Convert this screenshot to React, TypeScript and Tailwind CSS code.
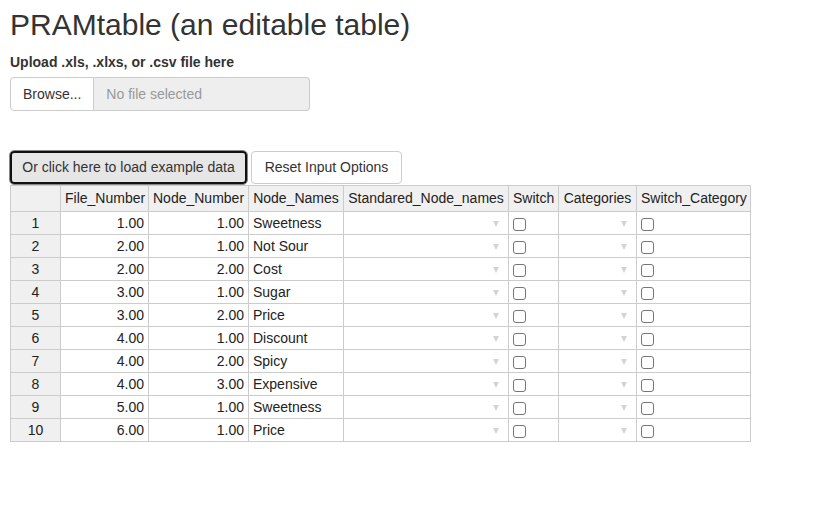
import React from "react";

const rows: [number, string, string, string][] = [
  [1, "1.00", "1.00", "Sweetness"],
  [2, "2.00", "1.00", "Not Sour"],
  [3, "2.00", "2.00", "Cost"],
  [4, "3.00", "1.00", "Sugar"],
  [5, "3.00", "2.00", "Price"],
  [6, "4.00", "1.00", "Discount"],
  [7, "4.00", "2.00", "Spicy"],
  [8, "4.00", "3.00", "Expensive"],
  [9, "5.00", "1.00", "Sweetness"],
  [10, "6.00", "1.00", "Price"],
];

const headers = [
  { label: "", w: "w-[50px]" },
  { label: "File_Number", w: "w-[88px]" },
  { label: "Node_Number", w: "w-[100px]" },
  { label: "Node_Names", w: "w-[95px]" },
  { label: "Standared_Node_names", w: "w-[165px]" },
  { label: "Switch", w: "w-[50px]" },
  { label: "Categories", w: "w-[78px]" },
  { label: "Switch_Category", w: "w-[114px]" },
];

// petit triangle gris des cellules "dropdown"
function Arrow() {
  return (
    <span className="absolute right-[9px] top-[9px] h-0 w-0 border-x-[3.5px] border-t-[6px] border-x-transparent border-t-[#d4d4d4]" />
  );
}

function Check() {
  return (
    <span className="mt-[6px] block h-[13px] w-[13px] rounded-[3px] border border-[#767676] bg-white" />
  );
}

export default function App() {
  const cell = "h-[23px] border border-[#ccc] px-[4px] py-0 leading-[22px]";

  return (
    <div className="min-h-[510px] bg-white px-[10px] font-['Liberation_Sans',Arial,sans-serif] text-[14px] text-[#333]">
      <h1 className="pt-[8px] text-[30px] leading-[33px] font-normal">
        PRAMtable (an editable table)
      </h1>

      <div className="mt-[11px] text-[14px] font-bold leading-[20px]">
        Upload .xls, .xlxs, or .csv file here
      </div>

      <div className="mt-[5px] flex h-[34px] w-[300px]">
        <div className="flex items-center rounded-l-[4px] border border-[#ccc] bg-white px-[12px]">
          Browse...
        </div>
        <div className="flex flex-1 items-center rounded-r-[4px] border border-l-0 border-[#ccc] bg-[#eee] px-[12px] text-[#999]">
          No file selected
        </div>
      </div>

      <div className="mt-[40px] flex gap-[4px]">
        <button
          type="button"
          className="h-[33px] w-[237px] rounded-[4px] border-[2px] border-[#111] bg-[#e6e6e6] outline outline-1 outline-[#888] text-[14px] text-[#333]"
        >
          Or click here to load example data
        </button>
        <button
          type="button"
          className="h-[33px] w-[151px] rounded-[4px] border border-[#ccc] bg-white text-[14px] text-[#333]"
        >
          Reset Input Options
        </button>
      </div>

      <table className="mt-[1px] w-[741px] table-fixed border-collapse text-[14px] text-[#222]">
        <thead>
          <tr>
            {headers.map((h) => (
              <th
                key={h.label || "rowhead"}
                className={`${h.w} h-[26px] border border-[#ccc] bg-[#f0f0f0] px-[4px] py-0 text-center font-normal whitespace-nowrap`}
              >
                {h.label}
              </th>
            ))}
          </tr>
        </thead>
        <tbody>
          {rows.map(([n, f, node, name]) => (
            <tr key={n}>
              <td className={`${cell} bg-[#f0f0f0] text-center`}>{n}</td>
              <td className={`${cell} text-right`}>{f}</td>
              <td className={`${cell} text-right`}>{node}</td>
              <td className={cell}>{name}</td>
              <td className={`${cell} relative`}>
                <Arrow />
              </td>
              <td className={`${cell} align-top`}>
                <Check />
              </td>
              <td className={`${cell} relative`}>
                <Arrow />
              </td>
              <td className={`${cell} align-top`}>
                <Check />
              </td>
            </tr>
          ))}
        </tbody>
      </table>
    </div>
  );
}
